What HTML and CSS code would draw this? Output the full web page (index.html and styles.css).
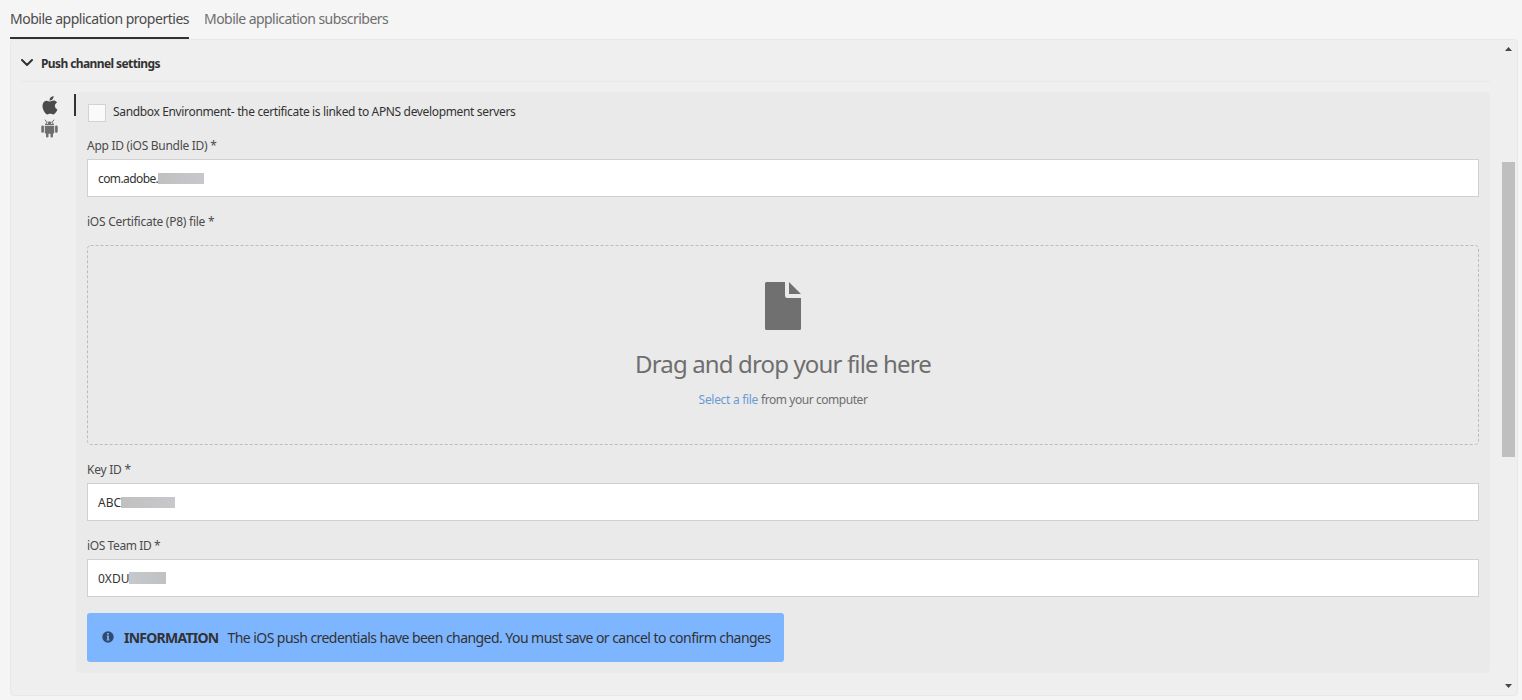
FILE: index.html
```html
<!DOCTYPE html>
<html lang="en">
<head>
<meta charset="utf-8">
<title>Mobile application properties</title>
<link rel="stylesheet" href="styles.css">
</head>
<body>
<nav class="tabs">
  <a class="tab tab-active"><span class="t-tab1">Mobile application properties</span></a>
  <a class="tab"><span class="t-tab2">Mobile application subscribers</span></a>
</nav>
<main class="panel">
  <div class="panel-content">
    <header class="section-header">
      <svg class="chevron" viewBox="0 0 12 8"><path d="M1 1l5 5 5-5" fill="none" stroke="#323232" stroke-width="2" stroke-linecap="round" stroke-linejoin="round"/></svg>
      <h2 class="section-title">Push channel settings</h2>
    </header>
    <div class="section-body">
      <div class="platforms">
        <svg class="platform-icon" viewBox="0 0 18 20">
          <path fill="#4b4b4b" d="M12.600 1c.1 1.500-.5 2.600-1.300 3.400-.8.800-1.800 1.200-2.800 1.100-.1-1.300.5-2.400 1.300-3.200C10.600 1.500 11.700 1.100 12.600 1zM16 7.400c-1.300.8-2.100 1.900-2.100 3.400 0 1.700 1 3 2.500 3.600-.4 1.200-1 2.200-1.700 3.200-.7 1-1.400 1.800-2.500 1.800s-1.500-.7-2.900-.7-1.800.7-2.900.7-1.900-.9-2.600-1.900C2.400 15.500 1.500 13 1.500 10.900c0-3.400 2.100-5.200 4.300-5.200 1.300 0 2.300.8 3.200.8s2.100-.9 3.600-.9c1.300 0 2.500.6 3.400 1.800z"/>
        </svg>
        <svg class="platform-icon android" viewBox="0 0 18 19">
          <g fill="#6e6e6e"><path d="M4 6c.1-2 1.800-3.600 4.500-3.600S12.900 4 13 6z"/><path d="M3.800 6.800h9.400v6.700c0 .7-.5 1.200-1.100 1.200H4.900c-.6 0-1.100-.5-1.100-1.200z"/><rect x=".3" y="6.500" width="2.600" height="7.200" rx="1.200"/><rect x="14.100" y="6.500" width="2.600" height="7.200" rx="1.200"/><rect x="5" y="13" width="2.500" height="5.500" rx="1"/><rect x="9.500" y="13" width="2.500" height="5.500" rx="1"/></g>
          <path d="M4 .7l1.700 2.400M13 .7l-1.700 2.400" stroke="#6e6e6e"/><circle cx="6.400" cy="4.300" r=".8" fill="#efefef"/><circle cx="10.600" cy="4.300" r=".8" fill="#efefef"/>
        </svg>
      </div>
      <div class="marker"></div>
      <form class="form">
        <label class="check-row"><span class="checkbox"></span><span class="t-sandbox">Sandbox Environment- the certificate is linked to APNS development servers</span></label>
        <label class="label"><span class="t-app">App ID (iOS Bundle ID) *</span></label>
        <div class="input"><span class="t-com">com.adobe.</span><span class="redacted mask-app"></span></div>
        <label class="label"><span class="t-cert">iOS Certificate (P8) file *</span></label>
        <div class="dropzone">
          <svg class="dropzone-outline"><rect x=".5" y=".5" width="1391" height="199" rx="3" fill="none" stroke="#bcbcbc" stroke-dasharray="3 2"/></svg>
          <svg class="file-icon" viewBox="0 0 36 48"><path fill="#707070" d="M1.500 0H20v13.500A2.500 2.500 0 0 0 22.500 16H36v30.500a1.500 1.500 0 0 1-1.500 1.500h-33A1.500 1.500 0 0 1 0 46.500v-45A1.500 1.500 0 0 1 1.500 0zM24 0l12 12H24z"/></svg>
          <div class="drop-title"><span class="t-drag">Drag and drop your file here</span></div>
          <div class="drop-sub"><a class="link t-select">Select a file</a><span class="t-from">from your computer</span></div>
        </div>
        <label class="label"><span class="t-key">Key ID *</span></label>
        <div class="input"><span class="t-abc">ABC</span><span class="redacted mask-key"></span></div>
        <label class="label"><span class="t-team">iOS Team ID *</span></label>
        <div class="input"><span class="t-oxdu">0XDU</span><span class="redacted mask-team"></span></div>
        <div class="alert">
          <svg class="info-icon" viewBox="0 0 12 12"><circle cx="6" cy="6" r="5.700" fill="#2f4a6c"/><path d="M5.100 2h1.800v1.600H5.100zM4.600 4.600h2.300v4h.7v1H4.500v-1h.7v-3h-.6z" fill="#7eb5ff"/></svg>
          <strong class="t-info">INFORMATION</strong><span class="t-msg">The iOS push credentials have been changed. You must save or cancel to confirm changes</span>
        </div>
      </form>
    </div>
  </div>
  <div class="scrollbar">
    <svg class="arrow" viewBox="0 0 7 4"><path d="M3.500 0L7 4H0z" fill="#484848"/></svg>
    <div class="thumb"></div>
    <svg class="arrow arrow-down" viewBox="0 0 7 4"><path d="M0 0h7L3.500 4z" fill="#484848"/></svg>
  </div>
</main>
</body>
</html>
```
FILE: styles.css
```css
* { box-sizing: border-box; }
body { margin: 0; height: 700px; overflow: hidden; background: #f5f5f5; color: #323232; font: 12px/20px "Noto Sans", sans-serif; }
svg { display: block; flex: none; }
span, strong, a { white-space: nowrap; }
.tabs { display: flex; gap: 15px; height: 39px; padding-left: 10px; font-size: 14px; }
.tab { height: 39px; padding-top: 9px; color: #6e6e6e; }
.tab-active { width: 179px; color: #4b4b4b; border-bottom: 2px solid #323232; }
.panel { display: flex; justify-content: space-between; margin-left: 10px; width: 1508px; height: 657px; border: 1px solid #e8e8e8; border-radius: 4px; background: #efefef; }
.panel-content { width: 1479px; padding-left: 10px; }
.section-header { display: flex; align-items: center; height: 42px; border-bottom: 1px solid #e8e8e8; padding-top: 5px; }
.chevron { width: 12px; height: 8px; margin-right: 8px; }
.section-title { margin: 0; padding-top: 2px; font-size: 12px; font-weight: 700; letter-spacing: -.6px; white-space: nowrap; }
.section-body { display: flex; padding-top: 10px; }
.platforms { width: 53px; padding: 3px 0 0 20px; }
.platform-icon { width: 18px; height: 20px; }
.android { height: 19px; margin-top: 4px; }
.marker { width: 2px; height: 22px; margin-top: 2px; background: #323232; }
.form { width: 1414px; height: 581px; padding: 10px 11px 0; background: #eaeaea; border-radius: 4px; }
.check-row { display: flex; height: 33px; }
.checkbox { width: 18px; height: 18px; margin: 2px 7px 0 1px; border: 1px solid #d3d3d3; background: #fafafa; }
.label { display: block; height: 24px; padding-top: 1px; color: #4b4b4b; }
.input { display: flex; align-items: center; height: 38px; padding-left: 10px; margin-bottom: 14px; background: #fff; border: 1px solid #d0d0d0; }
.input > :first-child { padding-top: 2px; }
.redacted { height: 11px; background: linear-gradient(90deg, #c1c0c0, #c7c8cc); }
.mask-app { width: 46px; }
.mask-key { width: 54px; }
.mask-team { width: 37px; height: 12px; background: linear-gradient(90deg, #c6c8cb, #c0c1c1); }
.dropzone { position: relative; display: flex; flex-direction: column; align-items: center; height: 200px; margin: 10px 0 14px; padding-top: 37px; color: #6e6e6e; }
.dropzone-outline { position: absolute; top: 0; left: 0; width: 1392px; height: 200px; }
.file-icon { width: 36px; height: 48px; }
.drop-title { margin-top: 18px; height: 42px; font-size: 24px; line-height: 32px; }
.drop-sub { display: flex; gap: 3px; }
.link { color: #6a9ad4; }
.alert { display: flex; align-items: center; width: 697px; height: 49px; margin-top: 16px; padding-left: 15px; border-radius: 3px; background: #7eb5ff; font-size: 14px; }
.info-icon { width: 12px; height: 12px; margin: 0 10px 2px 0; }
.t-info { margin-right: 9px; letter-spacing: -.75px; }
.t-msg { letter-spacing: -.55px; }
.t-tab1 { letter-spacing: -.48px; }
.t-tab2 { letter-spacing: -.55px; }
.t-sandbox { letter-spacing: -.345px; }
.t-app { letter-spacing: -.29px; }
.t-cert { letter-spacing: -.25px; }
.t-com { letter-spacing: -.6px; }
.t-drag { letter-spacing: -.86px; }
.t-select { letter-spacing: -.3px; }
.t-from { letter-spacing: -.45px; }
.t-key { letter-spacing: -.25px; }
.t-team { letter-spacing: -.4px; }
.scrollbar { display: flex; flex-direction: column; align-items: center; width: 13px; margin-right: 2px; padding-top: 7px; }
.arrow { width: 7px; height: 4px; }
.thumb { width: 13px; height: 295px; margin-top: 111px; background: #bfbfbf; }
.arrow-down { margin-top: 227px; }
```
